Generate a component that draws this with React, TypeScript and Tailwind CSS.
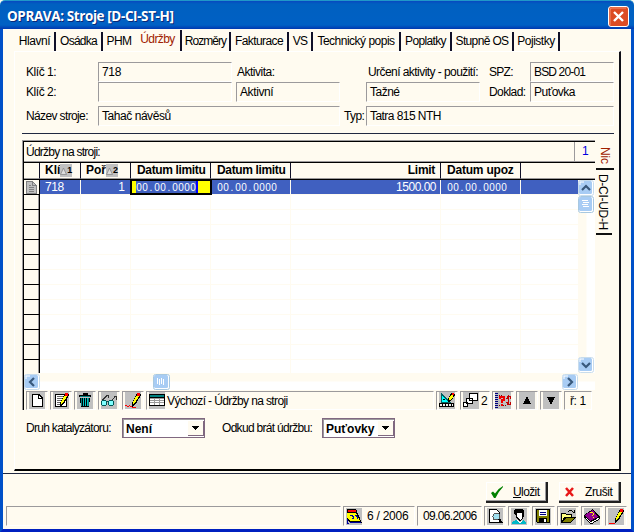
import type { ReactNode } from "react";

const tabs = [
    { label: "Hlavní", box: "w-[41px] tracking-[-0.45px]" },
    { label: "Osádka", box: "w-[47px] tracking-[-0.75px]" },
    { label: "PHM", box: "w-[32px] tracking-[-0.6px]" },
    { label: "Údržby", box: "w-[47px] tracking-[-0.6px]", active: true },
    { label: "Rozměry", box: "w-[49px] tracking-[-0.95px]" },
    { label: "Fakturace", box: "w-[58px] tracking-[-0.6px]" },
    { label: "VS", box: "w-[24px] tracking-[-0.8px]" },
    { label: "Technický popis", box: "w-[88px] tracking-[-0.5px]" },
    { label: "Poplatky", box: "w-[51px] tracking-[-0.65px]" },
    { label: "Stupně OS", box: "w-[62px] tracking-[-0.65px]" },
    { label: "Pojistky", box: "w-[46px] tracking-[-0.5px]" },
];

const emptyRows = Array.from({ length: 12 }, (_, i) => i);

function Field({ className = "", children }: { className?: string; children?: ReactNode }) {
    return (
        <div className={`h-5 shrink-0 overflow-hidden whitespace-nowrap border-l border-t border-b border-r border-l-[#9c9a9c] border-t-[#9c9a9c] border-b-white border-r-white pl-[3px] leading-[18px] ${className}`}>
            {children}
        </div>
    );
}

function Label({ className = "", children }: { className?: string; children?: ReactNode }) {
    return <div className={`h-5 shrink-0 whitespace-nowrap leading-5 ${className}`}>{children}</div>;
}

function Cell({ className = "", children }: { className?: string; children?: ReactNode }) {
    return (
        <div className={`flex shrink-0 items-center border-l border-t border-b border-r border-l-[#9c9a9c] border-t-[#9c9a9c] border-b-white border-r-white ${className}`}>
            {children}
        </div>
    );
}

function Icon({ children }: { children: ReactNode }) {
    return (
        <svg viewBox="0 0 16 17" shapeRendering="crispEdges" fill="none" className="h-[17px] w-4 shrink-0 bg-[#c0c0c0]">
            {children}
        </svg>
    );
}

function DateText({ value }: { value: string }) {
    return (
        <span className="flex text-[10px] leading-[13px]">
            {value.split("").map((c, i) => (
                <span key={i} className="w-[6px] text-center">{c}</span>
            ))}
        </span>
    );
}

function SortMark({ n }: { n: string }) {
    return (
        <span className="flex h-[13px] w-[12px] items-center bg-[#c0c0c0] text-[9px]">
            <svg viewBox="0 0 7 8" className="h-2 w-[7px]" fill="none">
                <path d="M.5 7.5 3.5 1l3 6.5z" fill="#ddd" stroke="#888" strokeWidth=".8" />
            </svg>
            {n}
        </span>
    );
}

function ScrollButton({ d }: { d: string }) {
    return (
        <svg viewBox="0 0 16 16" fill="none" className="size-4 shrink-0">
            <rect x=".5" y=".5" width="15" height="15" rx="2" fill="#fff" stroke="#c8dcec" />
            <rect x="1" y="1" width="13" height="13" rx="1.5" fill="#a8ccf4" />
            <path d="M2 5V2h4" stroke="#fff" />
            <path d={d} stroke="#38587c" strokeWidth="2.2" />
        </svg>
    );
}

function Pencil() {
    return (
        <>
            <path d="M12 1h3l1 2-5 9-4 3V11z" fill="#000" />
            <path d="M11 4h3l-4 7-2 1v-2z" fill="#ff0" />
            <path d="M12 1h3v3h-3z" fill="#f00" />
        </>
    );
}

function TitleBar() {
    return (
        <div className="flex h-[29px] shrink-0 items-center justify-between rounded-t-[5px] border-t border-t-[#2098c8] bg-[linear-gradient(#0848c0_0,#0060c0_3px,#0060c4_24px,#0038b0_28px)] pl-[7px] pr-[5px]">
            <span className="mt-[2px] whitespace-nowrap font-['Open_Sans',sans-serif] text-[13.5px] font-bold tracking-[-0.4px] text-white [text-shadow:1px_1px_0_#082878]">
                OPRAVA: Stroje [D-CI-ST-H]
            </span>
            <svg viewBox="0 0 21 21" className="mt-[2px] size-[21px]" fill="none">
                <rect x=".5" y=".5" width="20" height="20" rx="2.5" fill="#dc4c24" stroke="#fff" />
                <path d="M2 19V4q0-2 2-2h14" stroke="#f09070" />
                <path d="m6 6 9 9M15 6l-9 9" stroke="#fff" strokeWidth="2.4" />
            </svg>
        </div>
    );
}

function TabStrip() {
    return (
        <div className="flex h-[22px] shrink-0 pl-[12px]">
            {tabs.map((t) => (
                <div
                    key={t.label}
                    className={`flex shrink-0 justify-center whitespace-nowrap ${t.box} ${
                        t.active
                            ? "mt-px h-[21px] border-r-2 border-[#101028] leading-[18px] text-[#a02000]"
                            : t.label === "PHM"
                              ? "mt-[3px] h-[19px] leading-[19px]"
                              : "mt-[3px] h-[19px] border-r-2 border-[#101028] leading-[19px]"
                    }`}
                >
                    {t.label}
                </div>
            ))}
        </div>
    );
}

function Form() {
    return (
        <div className="pl-[11px] pt-[10px]">
            <div className="flex">
                <Label className="w-[72px] tracking-[-0.45px]">Klíč 1:</Label>
                <Field className="w-[134px] tracking-[-0.3px]">718</Field>
                <Label className="w-[130px] pl-[5px] tracking-[-0.5px]">Aktivita:</Label>
                <Label className="w-[127px] pl-[6px] tracking-[-0.56px]">Určení aktivity - použití:</Label>
                <Label className="w-[41px] tracking-[-0.7px]">SPZ:</Label>
                <Field className="w-[84px] tracking-[-0.85px]">BSD 20-01</Field>
            </div>
            <div className="flex">
                <Label className="w-[72px] tracking-[-0.45px]">Klíč 2:</Label>
                <Field className="w-[134px]" />
                <Field className="ml-1 w-[104px] tracking-[-0.4px]">Aktivní</Field>
                <Field className="ml-[26px] w-[114px] tracking-[-0.5px]">Tažné</Field>
                <Label className="ml-[9px] w-[41px] tracking-[-0.6px]">Doklad:</Label>
                <Field className="w-[84px] tracking-[-0.5px]">Puťovka</Field>
            </div>
            <div className="mt-1 flex">
                <Label className="w-[72px] tracking-[-0.63px]">Název stroje:</Label>
                <Field className="w-[242px] tracking-[-0.45px]">Tahač návěsů</Field>
                <Label className="w-[26px] pl-[4px] tracking-[-0.6px]">Typ:</Label>
                <Field className="w-[248px] tracking-[-0.55px]">Tatra 815 NTH</Field>
            </div>
        </div>
    );
}

function HeaderCell({ className = "", children }: { className?: string; children?: ReactNode }) {
    return (
        <div className={`flex shrink-0 items-center whitespace-nowrap border-b border-r border-b-[#9c9a9c] border-r-[#101028] font-bold leading-[15px] ${className}`}>
            {children}
        </div>
    );
}

function Grid() {
    return (
        <div className="flex h-[232px] w-[571px] flex-col">
            <div className="flex h-[22px] shrink-0 border-b border-t border-b-black border-t-black">
                <div className="grow border-b border-b-[#9c9a9c] pl-[2px] leading-[20px] tracking-[-0.75px]">Údržby na stroji:</div>
                <div className="w-[21px] border-b border-l border-b-[#9c9a9c] border-l-[#9c9a9c] pl-[7px] leading-[18px] text-[#0000e0]">1</div>
            </div>
            <div className="flex h-[17px] shrink-0 border-b border-b-black">
                <HeaderCell className="w-[16px]" />
                <HeaderCell className="w-[41px] pl-[5px]">Klí<SortMark n="1" /></HeaderCell>
                <HeaderCell className="w-[50px] pl-[5px]">Poř<SortMark n="2" /></HeaderCell>
                <HeaderCell className="w-[80px] pl-[6px] tracking-[-0.35px]">Datum limitu</HeaderCell>
                <HeaderCell className="w-[80px] pl-[6px] tracking-[-0.35px]">Datum limitu</HeaderCell>
                <HeaderCell className="w-[150px] justify-end pr-[5px] tracking-[-0.3px]">Limit</HeaderCell>
                <HeaderCell className="w-[80px] pl-[6px] tracking-[-0.2px]">Datum upoz</HeaderCell>
                <div className="grow border-b border-b-[#9c9a9c]" />
            </div>
            <div className="flex h-[193px] shrink-0">
                <div className="w-[554px] overflow-hidden bg-white">
                    <div className="flex h-[15px] bg-[#4060c0] leading-[14px] text-white">
                        <div className="flex w-[16px] items-center justify-center border-b border-r border-black bg-[#fffbf0]">
                            <svg viewBox="0 0 11 13" className="h-[13px] w-[11px]" shapeRendering="crispEdges">
                                <path d="M.5.5h6l4 4v8H.5z" fill="#c0c0c0" stroke="#808080" />
                                <path d="M6.5.5v4h4M3 4.500h2M3 6.500h5M3 8.500h5M3 10.500h5" stroke="#808080" fill="none" />
                            </svg>
                        </div>
                        <div className="w-[41px] border-b border-r border-[#fffbf0] pl-[5px] tracking-[-0.4px]">718</div>
                        <div className="w-[49px] border-b border-[#fffbf0] pr-[5px] text-right">1</div>
                        <div className="flex w-[82px] border-2 border-t border-black bg-[#ffff00] pl-[4px]">
                            <div className="flex h-[12px] w-[62px] items-center border-r-2 border-[#0000ff] bg-[#4060c0]">
                                <DateText value="00.00.0000" />
                            </div>
                        </div>
                        <div className="flex w-[79px] items-center border-b border-r border-[#fffbf0] pl-[5px]"><DateText value="00.00.0000" /></div>
                        <div className="w-[150px] border-b border-r border-[#fffbf0] pr-[4px] text-right tracking-[-0.5px]">1500.00</div>
                        <div className="flex w-[80px] items-center border-b border-r border-[#fffbf0] pl-[6px]"><DateText value="00.00.0000" /></div>
                        <div className="grow border-b border-[#fffbf0]" />
                    </div>
                    {emptyRows.map((i) => (
                        <div key={i} className="flex h-[15px]">
                            <div className="w-[16px] border-b border-r border-b-black border-r-black bg-[#fffbf0] shadow-[inset_-1px_0_#9c9a9c]" />
                            <div className="w-[41px] border-b border-r border-[#fffbf0]" />
                            <div className="w-[50px] border-b border-r border-[#fffbf0]" />
                            <div className="w-[80px] border-b border-r border-[#fffbf0]" />
                            <div className="w-[80px] border-b border-r border-[#fffbf0]" />
                            <div className="w-[150px] border-b border-r border-[#fffbf0]" />
                            <div className="w-[80px] border-b border-r border-[#fffbf0]" />
                            <div className="grow border-b border-[#fffbf0]" />
                        </div>
                    ))}
                </div>
                <div className="flex w-[17px] flex-col bg-[linear-gradient(90deg,#fffbf0_8px,#fff_9px)]">
                    <ScrollButton d="m4 10 4-4 4 4" />
                    <svg viewBox="0 0 16 17" className="h-[17px] w-4" fill="none">
                        <rect x=".5" y=".5" width="15" height="16" rx="2" fill="#fff" stroke="#a8c8e0" />
                        <rect x="1" y="1" width="13" height="14" rx="1.500" fill="#a8ccf4" />
                        <path d="M4 4.500h6M5 6.500h6M4 8.500h6M5 10.500h6" stroke="#fff" />
                    </svg>
                    <div className="grow" />
                    <ScrollButton d="m4 6 4 4 4-4" />
                </div>
            </div>
        </div>
    );
}

function HorizontalScroll() {
    return (
        <div className="flex h-[17px] items-center bg-[linear-gradient(#fffbf0_8px,#fff_9px)] pr-[17px]">
            <ScrollButton d="M10 4 6 8l4 4" />
            <div className="w-[113px]" />
            <svg viewBox="0 0 17 16" className="h-4 w-[17px]" fill="none">
                <rect x=".5" y=".5" width="16" height="15" rx="2" fill="#fff" stroke="#a8c8e0" />
                <rect x="1" y="1" width="14" height="13" rx="1.500" fill="#a8ccf4" />
                <path d="M4.500 4v6M6.500 5v6M8.500 4v6M10.500 5v6" stroke="#fff" />
            </svg>
            <div className="grow" />
            <ScrollButton d="m6 4 4 4-4 4" />
        </div>
    );
}

function Toolbar() {
    return (
        <div className="flex h-[19px] gap-[2px] pl-[2px]">
            <Cell className="w-[22px] pl-[2px]">
                <Icon>
                    <path d="M3 2h7l4 4v9H3z" fill="#000" />
                    <path d="M4 3h5v4h4v7H4z" fill="#fff" />
                    <path d="M10 4v2h2z" fill="#fff" />
                </Icon>
            </Cell>
            <Cell className="w-[22px] pl-[2px]">
                <Icon>
                    <path d="M2.500 2.500h11v12h-11z" fill="#fff" stroke="#000" />
                    <path d="M4 4.500h6M4 6.500h5M4 8.500h4M4 10.500h3M4 12.500h3" stroke="#666" />
                    <Pencil />
                </Icon>
            </Cell>
            <Cell className="w-[22px] pl-[2px]">
                <Icon>
                    <path d="M2 3h12v2H2zM6 1h5v2H6z" fill="#000" />
                    <path d="M3 6h10l-1 9H4z" fill="#000" />
                    <path d="M3 4h10M4.500 6v8M11.500 6v8" stroke="#008080" />
                    <path d="M6.500 6v8M8.500 6v8M10.500 6v8" stroke="#00c0c0" />
                </Icon>
            </Cell>
            <Cell className="w-[22px] pl-[2px]">
                <Icon>
                    <path d="M1 9h4v4H1zM8 9h4v4H8z" fill="#80ffff" />
                    <path d="M1 8.500h4M1 13.500h4M.5 9v4M5.500 9v4M8 8.500h4M8 13.500h4M7.500 9v4M12.500 9v4M6 9.500h2" stroke="#005858" />
                    <path d="M1.500 8 6 3.500h1v2M11.500 8l3-4h1v4" stroke="#333" />
                </Icon>
            </Cell>
            <Cell className="w-[22px] pl-[2px]">
                <Icon>
                    <Pencil />
                    <path d="M0 13.500h2M2 14.500h2M4 13.500h1M5 14.500h2M7 15.500h4" stroke="#f00" />
                </Icon>
            </Cell>
            <Cell className="w-[288px] pl-[2px]">
                <Icon>
                    <path d="M.5 2.500h15v11H.5z" fill="#fff" stroke="#000" />
                    <path d="M1 4h14" stroke="#008080" strokeWidth="2" />
                    <path d="M1 6.500h14M1 8.500h14M1 10.500h14M5.500 6v7M10.500 6v7" stroke="#999" />
                    <path d="M0 5.500h16" stroke="#000" />
                </Icon>
                <span className="whitespace-nowrap pl-[2px] tracking-[-0.62px]">Výchozí - Údržby na stroji</span>
            </Cell>
            <Cell className="w-[22px] pl-[2px]">
                <Icon>
                    <path d="M2.500 2v8h8z" fill="#0ff" stroke="#006060" />
                    <path d="M4 7.500h2" stroke="#000" />
                    <path d="M.5 11.500h14v3H.5z" fill="#eee" stroke="#000" />
                    <path d="M3.500 12v2M6.500 12v2M9.500 12v2M12.500 12v2" stroke="#000" />
                    <path d="M12 1h3l1 2-4 6-3 1V7z" fill="#000" />
                    <path d="M12 3h2v2l-3 3h-1V6z" fill="#ff0" />
                    <path d="M13 1h2v2h-2z" fill="#f00" />
                </Icon>
            </Cell>
            <Cell className="w-[30px] pl-[2px]">
                <Icon>
                    <path d="M6.500 1.500h8v7h-8zM3.500 6.500h6v5h-6zM.5 10.500h4v4h-4z" fill="#fff" stroke="#000" />
                </Icon>
                <span className="pl-[2px]">2</span>
            </Cell>
            <Cell className="w-[22px] pl-[2px]">
                <Icon>
                    <path d="M1.500 1v15" stroke="#000080" strokeWidth="3" strokeDasharray="1 1" />
                    <path d="M4 3.500h3M4 13.500h7" stroke="#800000" strokeDasharray="1 1" />
                    <path d="M5 7V5h4v3H7v3M7 12v2" stroke="#f00000" strokeWidth="2" />
                    <path d="M13.500 3v10M11 6.500h1v-2h3v2h1M11 10.500h1v2h3v-2h1" stroke="#c00000" />
                </Icon>
            </Cell>
            <Cell className="w-[22px] pl-[2px]">
                <Icon><path d="M4 12h8L8 4z" fill="#000" /></Icon>
            </Cell>
            <Cell className="w-[22px] pl-[2px]">
                <Icon><path d="M4 5h8l-4 8z" fill="#000" /></Icon>
            </Cell>
            <Cell className="w-[28px] pl-[5px] tracking-[-0.4px]">ř: 1</Cell>
        </div>
    );
}

function Select({ className = "", children }: { className?: string; children: ReactNode }) {
    return (
        <div className={`flex h-5 items-stretch border border-[#806880] bg-white shadow-[inset_1px_1px_#9c9a9c] ${className}`}>
            <span className="grow pl-[3px] pt-px text-[12px] font-bold leading-[18px]">{children}</span>
            <span className="mb-px mt-[2px] flex w-4 items-center justify-center border-b border-r border-[#806880] bg-[#fffbf0]">
                <svg viewBox="0 0 7 4" className="h-1 w-[7px]" shapeRendering="crispEdges"><path d="M0 0h7L3.500 4z" /></svg>
            </span>
        </div>
    );
}

function SideTabs() {
    return (
        <div className="ml-px flex w-[18px] flex-col pt-[3px]">
            <div className="flex h-[27px] items-center justify-center border-b-2 border-[#101010] pr-px tracking-[-0.2px] text-[#a02000] [writing-mode:vertical-rl]">Nic</div>
            <div className="mr-[2px] flex h-[65px] items-center justify-center whitespace-nowrap border-b-2 border-[#101010] pr-[2px] tracking-[-0.3px] [writing-mode:vertical-rl]">D-CI-UD-H</div>
        </div>
    );
}

function Footer() {
    return (
        <div className="flex h-[55px] flex-col">
            <div className="mt-[8px] flex gap-[11px] pl-[483px]">
                <button className="flex h-[21px] w-[62px] items-center border-b-2 border-r-2 border-[#202020] shadow-[inset_-1px_-1px_#9c9a9c,inset_1px_1px_#fff]">
                    <svg viewBox="0 0 12 12" className="ml-[5px] size-3"><path d="m0 7 2-1.500 2 2Q7 2.500 12 0v1Q7 6 4.500 12H3z" fill="#008000" /></svg>
                    <span className="pl-[10px] tracking-[-0.6px]"><span className="underline">U</span>ložit</span>
                </button>
                <button className="flex h-[21px] w-[62px] items-center border-b-2 border-r-2 border-[#202020] shadow-[inset_-1px_-1px_#9c9a9c,inset_1px_1px_#fff]">
                    <svg viewBox="0 0 9 10" className="ml-[6px] h-[10px] w-[9px]" fill="none"><path d="m1 1 7 8M8 1 1 9" stroke="#e81818" strokeWidth="2.500" /></svg>
                    <span className="pl-[11px] tracking-[-0.45px]">Zrušit</span>
                </button>
            </div>
            <div className="mt-[3px] flex pl-[3px]">
                <Field className="w-[335px]" />
                <Cell className="ml-[2px] h-5 w-[72px] pl-[2px]">
                    <Icon>
                        <path d="M1 1h9l6 14H4L1 10z" fill="#000" />
                        <path d="M2 2h8v2H2z" fill="#f00" />
                        <path d="M1 5h9l4 8H4L1 9z" fill="#ff0" />
                        <path d="M4 7.500h2v1h1v2H6M9 7.500h1v1h1v2" stroke="#0000a0" />
                        <path d="M4 14.500h11M1 11v4h2" stroke="#0000a0" />
                    </Icon>
                    <span className="whitespace-nowrap pl-[5px] tracking-[-0.25px]">6 / 2006</span>
                </Cell>
                <Cell className="ml-[2px] h-5 w-[65px] whitespace-nowrap pl-[5px] tracking-[-0.65px]">09.06.2006</Cell>
                <div className="ml-[2px] flex gap-[2px]">
                    <Cell className="h-5 w-[22px] pl-[2px]">
                        <Icon>
                            <path d="M2.500 1.500h7l3 3v10h-10z" fill="#fff" stroke="#000" />
                            <circle cx="9.500" cy="8.500" r="3.500" fill="#a0e0f0" stroke="#555" />
                            <path d="m12 11 3 4" stroke="#000" strokeWidth="2" />
                        </Icon>
                    </Cell>
                    <Cell className="h-5 w-[22px] pl-[2px]">
                        <Icon>
                            <path d="M4 1h7l2 2v5l-1 3-3 2-4-3V7L3 6V2z" fill="#000" />
                            <path d="M6 5h4l1 1v4l-2 2-3-3z" fill="#fff" />
                            <path d="M1 16v-2l4-2 4 3 3-3 3 2v2z" fill="#00b8c8" />
                            <path d="m6 12 3 3 2-2" stroke="#fff" />
                        </Icon>
                    </Cell>
                    <Cell className="h-5 w-[23px] pl-[2px]">
                        <Icon>
                            <path d="M1.500 1.500h13v13h-12l-1-1z" fill="#808000" stroke="#000" />
                            <path d="M4 2h8v6H4z" fill="#fff" />
                            <path d="M5 4.500h6M5 6.500h6" stroke="#000080" />
                            <path d="M4 10h8v5H4z" fill="#000" />
                            <path d="M9 11h2v3H9z" fill="#fff" />
                        </Icon>
                    </Cell>
                    <Cell className="h-5 w-[22px] pl-[2px]">
                        <Icon>
                            <path d="M1 5h4l1 1h6v4H5l-3 5H1z" fill="#000" />
                            <path d="M2 6h3l1 1h5v2H4l-2 4z" fill="#ffff80" />
                            <path d="M1 15 5 9h11l-5 6z" fill="#000" />
                            <path d="m3 14 3-4h8l-3 4z" fill="#808000" />
                            <path d="M8 3.500h1M9 2.500h3M12 3.500h1M13 4.500h2M14.500 2v3" stroke="#000" />
                        </Icon>
                    </Cell>
                    <Cell className="h-5 w-[22px] pl-[2px]">
                        <Icon>
                            <path d="m0 7 9-6 7 8v2l-8 5h-2l-6-7z" fill="#000" />
                            <path d="m1 7 8-5 5 7-8 4z" fill="#900090" />
                            <path d="m2 10 5 5 8-5" stroke="#fff" />
                            <path d="M6 4.500h3M9.500 5v2M8 7.500h1M9 9.500h1" stroke="#ff0" />
                        </Icon>
                    </Cell>
                    <Cell className="h-5 w-[22px] pl-[2px]">
                        <Icon><Pencil /><path d="M1 15.500h6" stroke="#f00" /></Icon>
                    </Cell>
                </div>
            </div>
        </div>
    );
}

export default function App() {
    return (
        <div className="flex h-[532px] w-[634px] flex-col overflow-hidden bg-[#fffbf0] font-['Liberation_Sans',Arial,sans-serif] text-[12px] text-black">
            <TitleBar />
            <div className="flex h-[503px] flex-col border-x-[3px] border-b-[3px] border-x-[#0050c8] border-b-[#0020c0]">
                <TabStrip />
                <div className="ml-[11px] h-[420px] w-[607px] shrink-0 border-b-2 border-l border-r-2 border-t border-b-black border-l-white border-r-[#101018] border-t-white">
                    <Form />
                    <div className="ml-[7px] mt-[7px] h-px w-[592px] bg-[#202840]" />
                    <div className="ml-[7px] mt-[6px] flex">
                        <div className="w-[573px] border-l border-t border-[#9c9a9c]">
                            <div className="border-l border-black">
                                <Grid />
                                <HorizontalScroll />
                                <div className="h-px" />
                                <Toolbar />
                            </div>
                        </div>
                        <SideTabs />
                    </div>
                    <div className="mt-[8px] flex items-center pl-[11px]">
                        <Label className="w-[96px] tracking-[-0.7px]">Druh katalyzátoru:</Label>
                        <Select className="w-[83px]">Není</Select>
                        <Label className="ml-[17px] w-[100px] tracking-[-0.7px]">Odkud brát údržbu:</Label>
                        <Select className="w-[73px]">Puťovky</Select>
                    </div>
                </div>
                <div className="mt-[2px] h-px shrink-0 bg-[#202840]" />
                <Footer />
            </div>
        </div>
    );
}
